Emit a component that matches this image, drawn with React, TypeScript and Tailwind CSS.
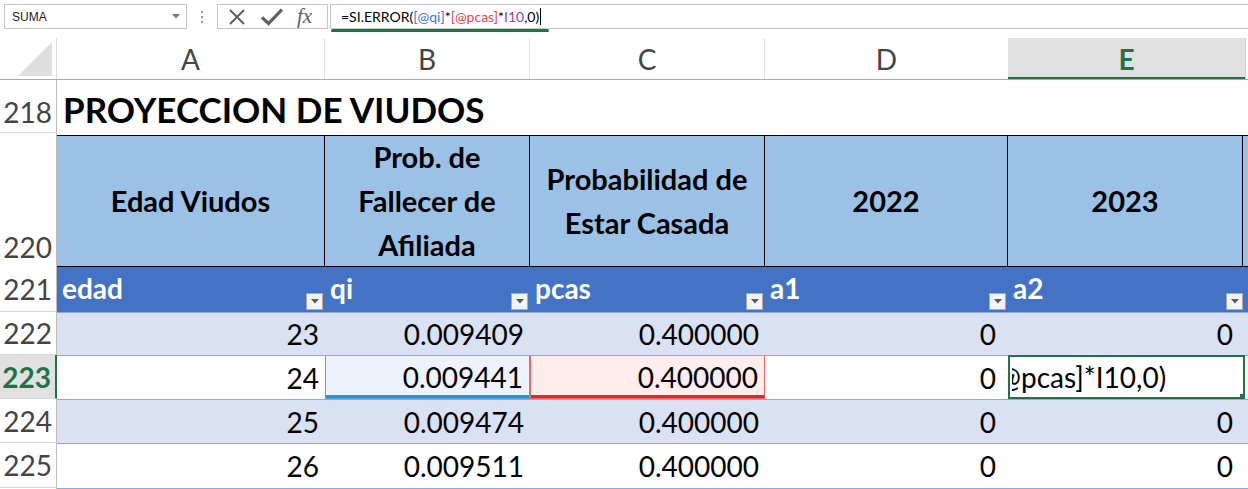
import type { ReactNode } from 'react'

const font = "font-['Lato','Noto_Sans',sans-serif]"

/** Little grey dropdown square in the table header row. */
function FilterButton() {
  return (
    <span className="absolute bottom-[2px] right-[2px] flex h-[17px] w-[17px] items-center justify-center border border-[#ababab] bg-[#f3f3f3]">
      <svg width="8" height="5" viewBox="0 0 8 5">
        <path d="M0 0h8L4 4.5z" fill="#595959" />
      </svg>
    </span>
  )
}

function RowNum({ n, active = false, align = 'center', border = true }: { n?: string; active?: boolean; align?: 'center' | 'end'; border?: boolean }) {
  return (
    <div
      className={`flex w-[57px] shrink-0 justify-end pr-[4px] text-[28px] leading-[34px] ${
        align === 'end' ? 'items-end pb-[3px]' : 'items-center'
      } ${active ? 'border-r-2 border-r-[#217346] bg-[#e1e1e1] font-bold text-[#217346]' : 'border-r border-r-[#bdbdbd] text-[#444]'} ${
        border ? 'border-b border-b-[#d8d8d8]' : ''
      }`}
    >
      {n}
    </div>
  )
}

function HeadCell({ w, children }: { w: string; children: ReactNode }) {
  return (
    <div className={`${w} flex shrink-0 items-center justify-center border-r border-t border-black text-center text-[29px] font-bold leading-[44px] text-black`}>
      {children}
    </div>
  )
}

function FieldCell({ w, label }: { w: string; label: string }) {
  return (
    <div className={`${w} relative shrink-0 pl-[5px] pt-[4px] text-[28px] font-bold leading-[34px] text-white`}>
      {label}
      <FilterButton />
    </div>
  )
}

const widths = ['w-[268px]', 'w-[205px]', 'w-[235px]', 'w-[243px]', 'w-[237px]']

const rows = [
  { n: '222', v: ['23', '0.009409', '0.400000', '0', '0'], band: true },
  { n: '223', v: ['24', '0.009441', '0.400000', '0', ''], band: false, active: true },
  { n: '224', v: ['25', '0.009474', '0.400000', '0', '0'], band: true },
  { n: '225', v: ['26', '0.009511', '0.400000', '0', '0'], band: false },
]

function DataRow({ r, h }: { r: (typeof rows)[number]; h: string }) {
  const bg = r.band ? 'bg-[#d9e1f2]' : 'bg-white'
  return (
    <div className={`flex ${h}`}>
      <RowNum n={r.n} active={r.active} />
      {r.v.map((v, i) => {
        let extra = `${bg}`
        if (r.active && i === 1)
          extra = 'bg-[#edf2fc] border border-[#6d93e4] shadow-[inset_0_-3px_0_#0aa3cf]'
        if (r.active && i === 2)
          extra = 'bg-[#fdeded] border border-[#ea6464] shadow-[inset_0_-3px_0_#e0262b]'
        if (r.active && i === 4)
          return (
            <div key={i} className="relative flex w-[237px] shrink-0 items-center overflow-hidden border-2 border-[#217346] bg-white pl-[2px]">
              <span className="whitespace-nowrap text-[28px] leading-[34px] text-black">
                <span className="inline-block w-[9px] overflow-hidden align-bottom [direction:rtl]">@</span>pcas]*I10,0)
              </span>
              <span className="absolute bottom-[-2px] right-[-2px] h-[5px] w-[5px] bg-[#217346]" />
            </div>
          )
        const pr = i >= 3 ? 'pr-[12px]' : 'pr-[6px]'
        return (
          <div
            key={i}
            className={`${widths[i]} flex shrink-0 items-center justify-end ${pr} border-t border-t-[#8ea9db] text-[28px] leading-[34px] text-black ${extra}`}
          >
            {v}
          </div>
        )
      })}
      <div className={`w-[3px] shrink-0 border-t border-t-[#8ea9db] ${bg}`} />
    </div>
  )
}

export default function App() {
  return (
    <div className={`h-[489px] w-[1248px] overflow-hidden bg-white ${font}`}>
      {/* formula bar */}
      <div className="flex h-[38px] items-start pt-[4px]">
        <div className="ml-[4px] flex h-[25px] w-[183px] items-center justify-between border border-[#c6c6c6] pl-[7px] pr-[6px] font-['Liberation_Sans',sans-serif] text-[12px] text-[#222]">
          SUMA
          <svg width="8" height="5" viewBox="0 0 8 5">
            <path d="M0 0h8L4 4.5z" fill="#777" />
          </svg>
        </div>
        <div className="flex h-[25px] w-[30px] flex-col items-center justify-center gap-[3px]">
          <span className="h-[2px] w-[2px] bg-[#9a9a9a]" />
          <span className="h-[2px] w-[2px] bg-[#9a9a9a]" />
          <span className="h-[2px] w-[2px] bg-[#9a9a9a]" />
        </div>
        <div className="flex h-[25px] w-[111px] items-center border border-[#c6c6c6]">
          <svg className="ml-[10px]" width="18" height="18" viewBox="0 0 18 18">
            <path d="M2 2L16 16M16 2L2 16" stroke="#5f5f5f" strokeWidth="2" />
          </svg>
          <svg className="ml-[15px]" width="22" height="18" viewBox="0 0 22 18">
            <path d="M1 9.5l6.5 6L21 1.5" stroke="#5f5f5f" strokeWidth="3.2" fill="none" strokeLinejoin="miter" />
          </svg>
          <span className="ml-[14px] font-['Liberation_Serif',serif] text-[21px] italic leading-none text-[#5f5f5f]">
            fx
          </span>
        </div>
        <div className="relative ml-[2px] flex h-[25px] flex-1 items-center border-y border-l border-[#c6c6c6] pl-[10px] text-[14px] text-black">
          <span>=SI.ERROR(</span>
          <span className="text-[#3a78e0]">[@qi]</span>
          <span>*</span>
          <span className="text-[#e2464e]">[@pcas]</span>
          <span>*</span>
          <span className="text-[#8e44ad]">I10</span>
          <span>,0)</span>
          <span className="ml-[1px] h-[17px] w-px bg-black" />
          <span className="absolute bottom-[-4px] left-0 h-[3px] w-[218px] rounded-full bg-[#107c41]" />
        </div>
      </div>

      {/* column letters */}
      <div className="flex h-[42px] border-b border-b-[#ababab] text-[28px] leading-[34px] text-[#444]">
        <div className="relative w-[57px] shrink-0 border-r border-r-[#dcdcdc]">
          <svg className="absolute bottom-[3px] right-[4px]" width="34" height="34" viewBox="0 0 34 34">
            <path d="M0 34H34V0z" fill="#dfdfdf" />
          </svg>
        </div>
        <div className="flex w-[268px] shrink-0 items-center justify-center border-r border-r-[#e1e1e1]">A</div>
        <div className="flex w-[205px] shrink-0 items-center justify-center border-r border-r-[#e1e1e1]">B</div>
        <div className="flex w-[235px] shrink-0 items-center justify-center border-r border-r-[#e1e1e1]">C</div>
        <div className="flex w-[243px] shrink-0 items-center justify-center">D</div>
        <div className="flex w-[237px] shrink-0 items-center justify-center bg-[#e1e1e1] font-bold text-[#217346] shadow-[inset_0_-2px_0_#217346]">
          E
        </div>
        <div className="w-[3px] shrink-0 border-l border-l-[#d0d0d0]" />
      </div>

      {/* row 218 */}
      <div className="flex h-[53px]">
        <RowNum n="218" align="end" />
        <div className="flex flex-1 items-center pl-[6px] pt-[4px] text-[35px] font-bold leading-[40px] text-black">
          PROYECCION DE VIUDOS
        </div>
      </div>
      {/* hidden row 219 */}
      <div className="flex h-[2px]">
        <div className="w-[57px] shrink-0 border-r border-r-[#bdbdbd]" />
      </div>

      {/* row 220 */}
      <div className="flex h-[132px]">
        <RowNum n="220" align="end" border={false} />
        <div className="flex flex-1 border-b border-b-black bg-[#9bc2e6]">
          <HeadCell w="w-[268px]">Edad Viudos</HeadCell>
          <HeadCell w="w-[205px]">
            Prob. de
            <br />
            Fallecer de
            <br />
            Afiliada
          </HeadCell>
          <HeadCell w="w-[235px]">
            Probabilidad de
            <br />
            Estar Casada
          </HeadCell>
          <HeadCell w="w-[243px]">2022</HeadCell>
          <HeadCell w="w-[235px]">2023</HeadCell>
          <div className="flex-1 border-t border-black" />
        </div>
      </div>

      {/* row 221 */}
      <div className="flex h-[45px]">
        <RowNum n="221" />
        <div className="flex flex-1 bg-[#4472c4]">
          <FieldCell w="w-[268px]" label="edad" />
          <FieldCell w="w-[205px]" label="qi" />
          <FieldCell w="w-[235px]" label="pcas" />
          <FieldCell w="w-[243px]" label="a1" />
          <FieldCell w="w-[237px]" label="a2" />
        </div>
      </div>

      <DataRow r={rows[0]} h="h-[43px]" />
      <DataRow r={rows[1]} h="h-[44px]" />
      <DataRow r={rows[2]} h="h-[44px]" />
      <DataRow r={rows[3]} h="h-[45px]" />
      <div className="flex h-[1px]">
        <div className="w-[57px] shrink-0 border-r border-r-[#bdbdbd]" />
        <div className="flex-1 bg-[#8ea9db]" />
      </div>
    </div>
  )
}
